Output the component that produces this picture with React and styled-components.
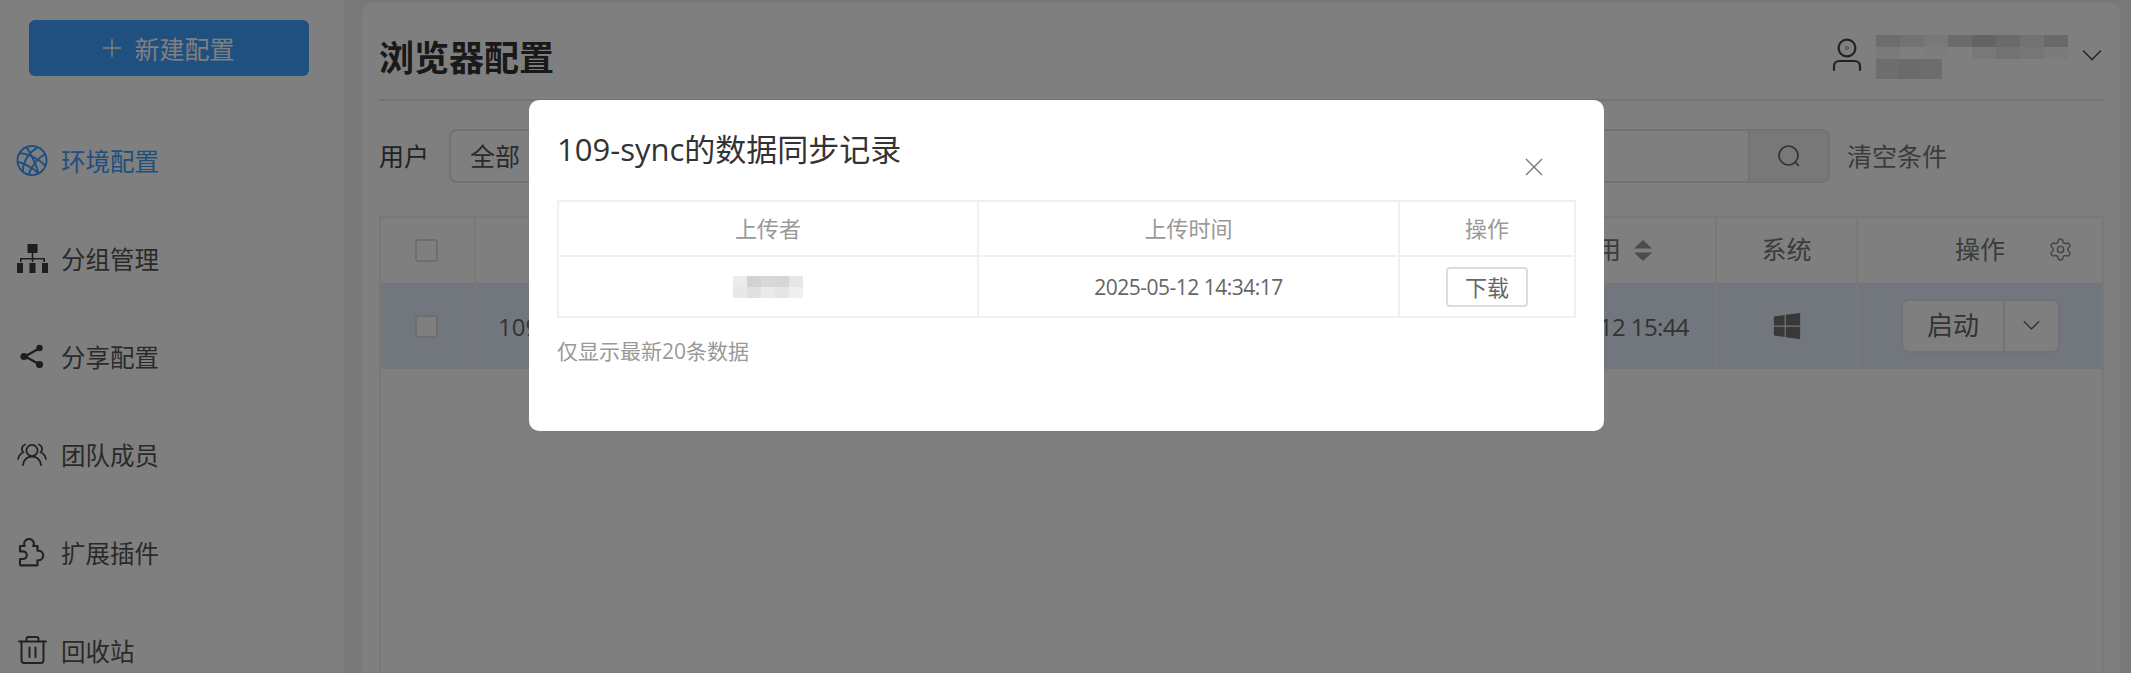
import React from 'react';
import styled, { createGlobalStyle } from 'styled-components';
import { FaWindows } from 'react-icons/fa';
import { Settings } from 'lucide-react';

const FONT = '"Open Sans", "Noto Sans CJK SC", sans-serif';

const GlobalStyle = createGlobalStyle`
  html, body {
    margin: 0;
    width: 2131px;
    height: 673px;
    overflow: hidden;
    font-family: ${FONT};
  }
  * { box-sizing: border-box; }
`;

const navItems = [
  { label: '环境配置', icon: <GlobeIcon />, active: true },
  { label: '分组管理', icon: <TreeIcon /> },
  { label: '分享配置', icon: <ShareIcon /> },
  { label: '团队成员', icon: <TeamIcon /> },
  { label: '扩展插件', icon: <PuzzleIcon /> },
  { label: '回收站', icon: <TrashIcon /> },
];

const nameBlur = [
  '#dadada', '#e6e6e6', '#f2f2f2', '#d6d6d6', '#c8c8c8', '#d4d4d4', '#e6e6e6', '#d2d2d2',
  '#f4f4f4', '#ffffff', '#fafafa', '#ffffff', '#f0f0f0', '#e4e4e4', '#ececec', '#f6f6f6',
];
const subBlur = ['#dcdcdc', '#d6d6d6', '#dadada'];
const uploaderBlur = [
  '#ececec', '#d2d2d2', '#d8d8d8', '#d6d6d6', '#e6e6e6',
  '#e8e8e8', '#e0e0e0', '#eaeaea', '#e6e6e6', '#efefef',
];

function GlobeIcon () {
  return (
    <svg width="33" height="33" viewBox="0 0 33 33" fill="none" stroke="#409eff" strokeWidth="2">
      <circle cx="16.5" cy="16.5" r="15" />
      <path d="M11 3c4 6 11 20 12 27M4 9c7 0 20 6 26 13M2 18c6 1 17 7 21 12M22 3C14 8 7 17 7 28M30 10c-6 3-14 11-17 21" />
    </svg>
  );
}

function TreeIcon () {
  return (
    <svg width="31" height="29" viewBox="0 0 31 29" fill="#3c3c3c" stroke="none">
      <rect x="10.5" y="0" width="10" height="9" />
      <rect x="0" y="19" width="6" height="10" />
      <rect x="12.5" y="19" width="6" height="10" />
      <rect x="25" y="19" width="6" height="10" />
      <path d="M14.7 9h1.6v5H28v4h-1.6v-2.4H16.3V18h-1.6v-2.4H4.6V18H3v-4h11.7z" />
    </svg>
  );
}

function ShareIcon () {
  return (
    <svg width="24" height="25" viewBox="0 0 24 25" fill="#3c3c3c" stroke="#3c3c3c" strokeWidth="2.4">
      <path d="M19 4.5 5 12.5l14 7.5" fill="none" />
      <circle cx="19.5" cy="4" r="3.2" stroke="none" />
      <circle cx="4" cy="12.5" r="3.6" stroke="none" />
      <circle cx="19.5" cy="20.5" r="3.6" stroke="none" />
    </svg>
  );
}

function TeamIcon () {
  return (
    <svg width="30" height="23" viewBox="0 0 30 23" fill="none" stroke="#444" strokeWidth="1.8" strokeLinecap="round">
      <circle cx="15" cy="7.5" r="5.6" />
      <path d="M6 22c.8-5.2 4-8.3 9-8.3s8.200 3.100 9 8.300" />
      <path d="M8 1.500C5 2.500 3.800 6.500 6.200 9.300 3.600 10.500 1.800 13 1 16" />
      <path d="M22 1.500c3 1 4.200 5 1.800 7.800 2.600 1.200 4.400 3.700 5.200 6.700" />
    </svg>
  );
}

function PuzzleIcon () {
  return (
    <svg width="29" height="29" viewBox="0 0 29 29" fill="none" stroke="#444" strokeWidth="2.1" strokeLinejoin="round">
      <path d="M2 8h4.800a4.800 4.800 0 1 1 8.400 0h4.300v4.800a4.800 4.800 0 1 1 0 9.400v5.200H3.500A1.500 1.500 0 0 1 2 25.900V21h3a3.800 3.800 0 0 0 0-7.600H2z" />
    </svg>
  );
}

function TrashIcon () {
  return (
    <svg width="29" height="28" viewBox="0 0 29 28" fill="none" stroke="#444" strokeWidth="2" strokeLinecap="round">
      <path d="M1 5.500h27" />
      <path d="M8.500 5V2.800c0-1 .7-1.700 1.700-1.700h8.600c1 0 1.700.7 1.700 1.700V5" />
      <path d="M3.500 5.500v18.700c0 1.600 1 2.700 2.600 2.700h16.800c1.600 0 2.600-1.100 2.600-2.700V5.500" />
      <path d="M11.500 11.500v9.500M17.500 11.500v9.500" />
    </svg>
  );
}

function UserIcon () {
  return (
    <svg width="30" height="34" viewBox="0 0 30 34" fill="none" stroke="#444" strokeWidth="2.2" strokeLinecap="round">
      <circle cx="15" cy="10" r="8.400" />
      <circle cx="15" cy="10" r="1.500" stroke="#888" strokeWidth="1" />
      <path d="M2 32v-3.500c0-3.600 2.600-5.500 5.500-5.500h15c2.900 0 5.500 1.900 5.500 5.500V32" />
    </svg>
  );
}

function Chevron ({ size = 20, color = '#555' }) {
  return (
    <svg width={size} height={size * 0.6} viewBox="0 0 20 12" fill="none" stroke={color} strokeWidth="1.700">
      <path d="M1 1.500 10 10.500 19 1.500" />
    </svg>
  );
}

export default function App () {
  return (
    <Page>
      <GlobalStyle />
      <Sidebar>
        <NewButton>
          <svg width="18" height="18" viewBox="0 0 18 18" stroke="#fff" strokeWidth="1.300">
            <path d="M9 0v18M0 9h18" />
          </svg>
          新建配置
        </NewButton>
        <Nav>
          {navItems.map((item) => (
            <NavItem key={item.label} $active={item.active}>
              <NavIcon>{item.icon}</NavIcon>
              {item.label}
            </NavItem>
          ))}
        </Nav>
      </Sidebar>

      <Main>
        <Header>
          <Title>浏览器配置</Title>
          <UserBox>
            <UserIcon />
            <UserBlur>
              <Mosaic $cols={8} $w={24} $h={12}>
                {nameBlur.map((c, i) => <MosaicCell key={i} $c={c} />)}
              </Mosaic>
              <Mosaic $cols={3} $w={22} $h={20}>
                {subBlur.map((c, i) => <MosaicCell key={i} $c={c} />)}
              </Mosaic>
            </UserBlur>
            <Chevron size={20} color="#555" />
          </UserBox>
        </Header>

        <Filters>
          <FilterLabel>用户</FilterLabel>
          <SelectBox>全部</SelectBox>
          <SearchGroup>
            <SearchInput />
            <SearchButton>
              <svg width="24" height="24" viewBox="0 0 24 24" fill="none" stroke="#666" strokeWidth="1.700" strokeLinecap="round">
                <circle cx="11.500" cy="11.500" r="9.500" />
                <path d="M18.500 18.500 21.500 21.500" />
              </svg>
            </SearchButton>
          </SearchGroup>
          <ClearLink>清空条件</ClearLink>
        </Filters>

        <Table>
          <HeadRow>
            <CheckCell><CheckBox /></CheckCell>
            <NameHead>名称</NameHead>
            <UsedHead>
              最近使用
              <svg width="18" height="21" viewBox="0 0 18 21" fill="#969696">
                <path d="M9 0 18 8.500H0zM9 21 0 12.500h18z" />
              </svg>
            </UsedHead>
            <SystemCell>系统</SystemCell>
            <OpsHead>
              操作
              <GearWrap><Settings size={25} strokeWidth={1.400} color="#888" /></GearWrap>
            </OpsHead>
          </HeadRow>
          <BodyRow>
            <CheckCell><CheckBox /></CheckCell>
            <NameCell>109-sync</NameCell>
            <UsedCell>2025-05-12 15:44</UsedCell>
            <SystemCell><FaWindows size={30} color="#707070" /></SystemCell>
            <OpsCell>
              <StartButton>
                <StartLabel>启动</StartLabel>
                <StartMore><Chevron size={17} color="#666" /></StartMore>
              </StartButton>
            </OpsCell>
          </BodyRow>
        </Table>
      </Main>

      <Mask>
        <Modal>
          <ModalTitle>109-sync的数据同步记录</ModalTitle>
          <CloseButton>
            <svg width="18" height="18" viewBox="0 0 18 18" stroke="#777" strokeWidth="1.400">
              <path d="M1 1l16 16M17 1 1 17" />
            </svg>
          </CloseButton>
          <SyncTable>
            <colgroup>
              <col style={{ width: 420 }} />
              <col style={{ width: 421 }} />
              <col style={{ width: 176 }} />
            </colgroup>
            <thead>
              <tr>
                <SyncHead>上传者</SyncHead>
                <SyncHead>上传时间</SyncHead>
                <SyncHead>操作</SyncHead>
              </tr>
            </thead>
            <tbody>
              <tr>
                <SyncCell>
                  <CenterMosaic $cols={5} $w={14} $h={11}>
                    {uploaderBlur.map((c, i) => <MosaicCell key={i} $c={c} />)}
                  </CenterMosaic>
                </SyncCell>
                <DateCell>2025-05-12 14:34:17</DateCell>
                <SyncCell><DownloadButton>下载</DownloadButton></SyncCell>
              </tr>
            </tbody>
          </SyncTable>
          <Note>仅显示最新20条数据</Note>
        </Modal>
      </Mask>
    </Page>
  );
}

const Page = styled.div`
  display: flex;
  width: 2131px;
  height: 673px;
  overflow: hidden;
  background: #f0f0f0;
`;

const Sidebar = styled.aside`
  width: 344px;
  flex: none;
  padding-top: 20px;
  background: #fff;
`;

const NewButton = styled.div`
  display: flex;
  align-items: center;
  justify-content: center;
  gap: 13px;
  width: 280px;
  height: 56px;
  margin-left: 29px;
  border-radius: 6px;
  background: #40a0ff;
  color: #fff;
  font-size: 25px;
`;

const Nav = styled.nav`
  margin-top: 35px;
`;

const NavItem = styled.div`
  display: flex;
  align-items: center;
  gap: 13px;
  height: 98px;
  padding-left: 16px;
  color: ${({ $active }) => ($active ? '#409eff' : '#555')};
  font-size: 24.500px;
`;

const NavIcon = styled.span`
  display: flex;
  align-items: center;
  justify-content: center;
  width: 32px;
`;

const Main = styled.main`
  flex: 1;
  margin: 3px 11px 0 18px;
  padding: 0 16px 0 17px;
  display: flex;
  flex-direction: column;
  border-radius: 10px 10px 0 0;
  background: #fff;
`;

const Header = styled.header`
  display: flex;
  align-items: center;
  justify-content: space-between;
  height: 98px;
  padding-top: 8px;
  border-bottom: 2px solid #e6e6e6;
`;

const Title = styled.h1`
  margin: 0;
  color: #333;
  font-size: 35px;
  font-weight: 700;
`;

const UserBox = styled.div`
  display: flex;
  align-items: center;
  gap: 14px;
  padding-right: 2px;
`;

const UserBlur = styled.div`
  width: 192px;
  margin-top: 4px;
`;

const Mosaic = styled.div`
  display: grid;
  grid-template-columns: repeat(${({ $cols }) => $cols}, ${({ $w }) => $w}px);
  grid-auto-rows: ${({ $h }) => $h}px;
`;

const CenterMosaic = styled(Mosaic)`
  justify-content: center;
`;

const MosaicCell = styled.i`
  display: block;
  background: ${({ $c }) => $c};
`;

const Filters = styled.div`
  display: flex;
  align-items: center;
  height: 54px;
  margin-top: 28px;
  padding-right: 157px;
  color: #555;
  font-size: 25px;
`;

const FilterLabel = styled.span`
  width: 50px;
  margin-top: -3px;
  color: #444;
`;

const SelectBox = styled.div`
  display: flex;
  align-items: center;
  width: 200px;
  height: 54px;
  margin-left: 20px;
  padding: 0 0 3px 19px;
  border: 2px solid #e4e4e4;
  border-radius: 8px;
`;

const SearchGroup = styled.div`
  flex: 1;
  display: flex;
  height: 54px;
  margin-left: 12px;
`;

const SearchInput = styled.div`
  flex: 1;
  border: 2px solid #e4e4e4;
  border-right: 0;
  border-radius: 8px 0 0 8px;
`;

const SearchButton = styled.div`
  display: flex;
  align-items: center;
  justify-content: center;
  width: 82px;
  border: 2px solid #e4e4e4;
  border-radius: 0 8px 8px 0;
  background: #f0f0f0;
`;

const ClearLink = styled.span`
  margin: -3px 0 0 17px;
  color: #777;
`;

const Table = styled.div`
  flex: 1;
  margin-top: 33px;
  border: 2px solid #f0f0f0;
  border-bottom: 0;
  color: #666;
  font-size: 25px;
`;

const TableRow = styled.div`
  display: grid;
  grid-template-columns: 95px 998px 243px 141px 1fr;
  > * { border-right: 2px solid #f0f0f0; }
  > *:last-child { border-right: 0; }
`;

const HeadRow = styled(TableRow)`
  height: 65px;
  color: #777;
`;

const BodyRow = styled(TableRow)`
  height: 86px;
  background: #e2eff8;
`;

const CheckCell = styled.div`
  display: flex;
  align-items: center;
  justify-content: center;
  padding: 0 3px 0 0;
`;

const CheckBox = styled.span`
  width: 23px;
  height: 23px;
  border: 2px solid #dcdcdc;
  border-radius: 3px;
  background: #fff;
`;

const NameHead = styled.div`
  display: flex;
  align-items: center;
  justify-content: center;
  padding-bottom: 6px;
`;

const NameCell = styled.div`
  display: flex;
  align-items: center;
  padding: 0 0 0 22px;
  font-size: 24px;
`;

const UsedHead = styled.div`
  display: flex;
  align-items: center;
  justify-content: flex-end;
  gap: 13px;
  padding: 0 63px 6px 0;
  > svg { margin-top: 6px; }
`;

const UsedCell = styled.div`
  display: flex;
  align-items: center;
  justify-content: flex-end;
  padding: 0 26px 0 0;
  font-size: 24px;
  letter-spacing: -0.6px;
`;

const SystemCell = styled.div`
  display: flex;
  align-items: center;
  justify-content: center;
  padding-bottom: ${({ children }) => (typeof children === 'string' ? '6px' : '1px')};
`;

const OpsHead = styled.div`
  display: flex;
  align-items: center;
  padding: 0 0 6px 97px;
`;

const GearWrap = styled.span`
  display: flex;
  margin: 3px 0 0 43px;
`;

const OpsCell = styled.div`
  display: flex;
  align-items: center;
  padding: 0 0 1px 43px;
`;

const StartButton = styled.div`
  display: flex;
  height: 54px;
  border: 2px solid #e4e4e4;
  border-radius: 8px;
  background: #fff;
  font-size: 26px;
`;

const StartLabel = styled.span`
  display: flex;
  align-items: center;
  justify-content: center;
  width: 102px;
  padding-bottom: 3px;
  border-right: 2px solid #e4e4e4;
`;

const StartMore = styled.span`
  display: flex;
  align-items: center;
  justify-content: center;
  width: 53px;
`;

const Mask = styled.div`
  position: fixed;
  inset: 0;
  background: rgba(0, 0, 0, 0.5);
`;

const Modal = styled.section`
  position: absolute;
  left: 529px;
  top: 100px;
  width: 1075px;
  height: 331px;
  padding: 0 28px;
  border-radius: 10px;
  background: #fff;
`;

const ModalTitle = styled.h2`
  height: 100px;
  margin: 0;
  padding-top: 27px;
  color: #333;
  font-size: 31px;
  line-height: 44px;
  font-weight: 400;
`;

const CloseButton = styled.span`
  position: absolute;
  left: 996px;
  top: 58px;
  display: flex;
`;

const SyncTable = styled.table`
  width: 1017px;
  table-layout: fixed;
  border-collapse: collapse;
  font-size: 22px;
`;

const SyncHead = styled.th`
  height: 55px;
  padding: 0 0 4px;
  border: 2px solid #eef0f4;
  color: #999;
  font-weight: 400;
`;

const SyncCell = styled.td`
  height: 61px;
  padding: 0;
  border: 2px solid #eef0f4;
  color: #666;
  text-align: center;
`;

const DateCell = styled(SyncCell)`
  font-size: 21px;
  letter-spacing: -0.5px;
`;

const DownloadButton = styled.span`
  display: inline-flex;
  align-items: center;
  justify-content: center;
  width: 82px;
  height: 40px;
  padding-bottom: 2px;
  border: 2px solid #dcdcdc;
  border-radius: 4px;
  color: #666;
`;

const Note = styled.p`
  margin: 17px 0 0;
  color: #999;
  font-size: 21px;
  line-height: 32px;
`;
